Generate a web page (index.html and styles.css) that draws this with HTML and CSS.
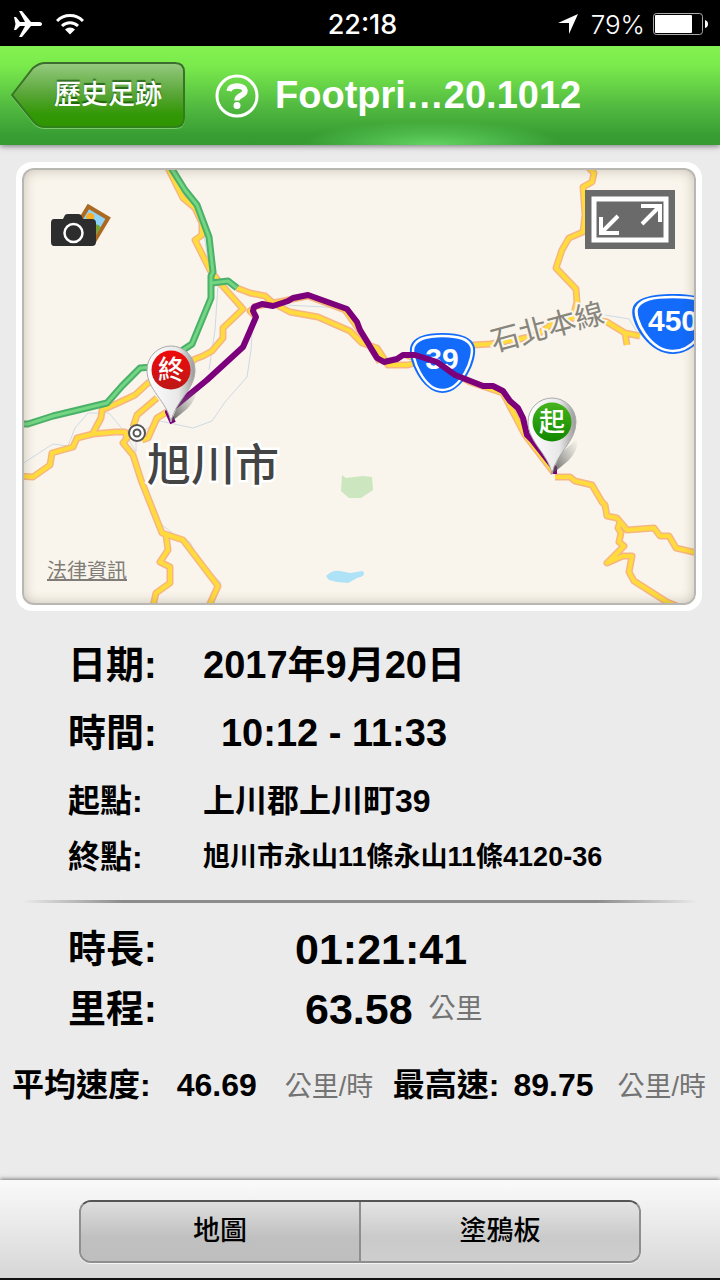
FILE: index.html
```html
<!DOCTYPE html>
<html lang="zh-Hant">
<head>
    <meta charset="UTF-8">
    <meta name="viewport" content="width=device-width, initial-scale=1.0">
    <title>Footprint</title>
    <link rel="stylesheet" href="styles.css">
</head>
<body>

    <!-- Status bar -->
    <div class="status-bar">
        <div class="status-left">
            <svg width="29" height="26" viewBox="0 0 29 26"><path fill="#fff" d="M1 6h2l4 5h5L6 0h3l9 11h8q3 0 3 2t-3 2h-8L9 26H6l6-11H7l-4 4H1l1.500-6z"/></svg>
            <svg width="28" height="22" viewBox="0 0 28 22"><g fill="none" stroke="#fff" stroke-width="3"><path d="M1 8a18 18 0 0 1 26 0"/><path d="M6 13a11.500 11.500 0 0 1 16 0"/></g><path fill="#fff" d="M9 16.500a7 7 0 0 1 10 0L14 21.500z"/></svg>
        </div>
        <div class="status-time">22:18</div>
        <div class="status-right">
            <svg width="20" height="20" viewBox="0 0 20 20"><path fill="#fff" d="M20 0L11 20V9H0z"/></svg>
            <span>79%</span>
            <svg width="55" height="22" viewBox="0 0 55 22"><rect x=".5" y=".5" width="49" height="21" rx="3" fill="none" stroke="#aaa"/><rect x="2" y="2" width="37" height="18" rx="1" fill="#fff"/><path fill="#fff" d="M52 7q3 1 3 4t-3 4z"/></svg>
        </div>
    </div>

    <!-- Navbar -->
    <div class="navbar">
        <button class="back-btn">
            <svg width="174" height="67" viewBox="0 0 174 67">
                <defs>
                    <linearGradient id="back-fill" x2="0" y2="1">
                        <stop offset="0" stop-color="#96cb80"/>
                        <stop offset=".5" stop-color="#57a535"/>
                        <stop offset=".8" stop-color="#339806"/>
                        <stop offset="1" stop-color="#2e9500"/>
                    </linearGradient>
                    <linearGradient id="back-line" x2="0" y2="1">
                        <stop offset="0" stop-color="#3d6d2c"/>
                        <stop offset="1" stop-color="#2f811b"/>
                    </linearGradient>
                </defs>
                <path d="M1 34L22 7Q28 2 34 2H164Q173 2 173 11V57Q173 66 164 66H34Q27 66 22 60Z" fill="none" stroke="#7bc96b" stroke-width="2"/>
                <path d="M1 33L22 6Q28 1 34 1H164Q173 1 173 10V56Q173 65 164 65H34Q27 65 22 59Z" fill="url(#back-fill)" stroke="url(#back-line)" stroke-width="2"/>
            </svg>
            <span>歷史足跡</span>
        </button>
        <button class="help-btn" aria-label="Help">
            <svg width="44" height="44" viewBox="0 0 44 44"><circle cx="22" cy="22" r="20" fill="none" stroke="#fff" stroke-width="3"/><path d="M14 17q1-5 8-5t8 4.500q0 3-4 5-4 2-4 5" fill="none" stroke="#fff" stroke-width="5.500"/><circle cx="22" cy="31.500" r="3.500" fill="#fff"/></svg>
        </button>
        <h1 class="title">Footpri…20.1012</h1>
    </div>

    <div class="container">
        <!-- Route map -->
        <div class="map-card">
            <svg class="map" viewBox="22 168 674 437" preserveAspectRatio="xMidYMid slice">
                <defs>
                    <linearGradient id="pin-fill">
                        <stop offset="0" stop-color="#fff"/>
                        <stop offset=".65" stop-color="#e8e8e8"/>
                        <stop offset="1" stop-color="#999"/>
                    </linearGradient>
                    <linearGradient id="pin-red" x2="0" y2="1"><stop offset="0" stop-color="#f00a0a"/><stop offset="1" stop-color="#bd1818"/></linearGradient>
                    <linearGradient id="pin-green" x2="0" y2="1"><stop offset="0" stop-color="#45b31c"/><stop offset="1" stop-color="#118800"/></linearGradient>
                    <linearGradient id="pin-shade" x1="0" y1="1" x2="1" y2="0"><stop offset="0" stop-color="#444" stop-opacity=".9"/><stop offset="1" stop-color="#888" stop-opacity="0"/></linearGradient>
                    <g id="roads">
                        <path d="M167 166L183 198 195 208 202 223V235L195 240 210 270 220 283 243 309 223 328V338L212 351 203 356 195 359 172 378 148 383 135 395 118 403 102 410 101 418 93 433"/>
                        <path d="M237 288L250 293 265 296 273 303 290 312 318 317 350 331 362 343 377 348 388 365H408L440 355 473 345 490 344 520 339 537 335 553 323 577 317 607 322 625 333 640 336M627 345L625 333"/>
                        <path d="M587 166L594 173 592 182 583 187 585 215 583 232 569 238 562 250 556 268 576 289 577 302 573 317"/>
                        <path d="M20 476L33 477 50 465 52 453 73 447 77 438 93 434 115 432H125L127 438 123 443 133 455 141 480 162 533 183 540 218 586 209 606"/>
                        <path d="M166 535L168 550 160 562 170 567V583L156 593 153 606M157 398L137 415 133 427M167 412L157 418 148 438 142 440"/>
                        <path d="M256 317L250 311 253 309M405 355L437 364 470 382 503 393 525 435 554 473M555 477H570L575 481 592 485 602 502 605 505 607 516 617 518 627 530 654 528 660 536H669L676 548 697 553"/>
                        <path d="M620 522L618 528 621 533 619 542 624 546 607 563 623 556H632L629 572 634 581 667 602 677 606M253 307L293 299 308 296 345 310 358 328 380 362"/>
                    </g>
                    <path id="highway" d="M170 166L185 190 197 205 209 237 213 272 211 276V298L192 344 183 350 165 366 140 368 122 386 107 403 78 410 53 416 28 424H20M212 283L228 281 237 288"/>
                    <g id="shield">
                        <path d="M0-31C18-31 29-27 32-18C36-6 21 29 0 29C-21 29-36-6-32-18C-29-27-18-31 0-31Z" fill="#126bfb"/>
                        <path d="M0-28C17-28 26-25 29-17C32-7 19 26 0 26C-19 26-32-7-29-17C-26-25-17-28 0-28Z" fill="none" stroke="#fff" stroke-width="2.500"/>
                    </g>
                    <g id="pin">
                        <path d="M0 52L8 32 25 17Q27 28 16 39Z" fill="url(#pin-shade)"/>
                        <path d="M0 52C-4 31-24 20-24 0A24 24 0 0 1 24 0C24 20 4 31 0 52Z" fill="url(#pin-fill)" stroke="#aaa"/>
                    </g>
                </defs>

                <rect x="22" y="168" width="674" height="437" fill="#f9f5ec"/>
                <path d="M342 475L346 478 363 476 372 477 373 490 361 498 349 498 341 491Z" fill="#cce6bf"/>
                <path d="M326 576Q332 570 340 571L350 573 363 571Q367 576 357 578L348 583Q338 583 329 580Z" fill="#aee2f7"/>
                <path fill="none" stroke="#cfdae4" d="M22 464L53 444 68 446 75 428 88 413H109L123 430 136 452V435L160 421 193 428 212 421 225 402 247 377 251 350 253 315M204 235L208 260M218 285L215 330 209 370M285 305L345 308M605 315L629 319 637 332M162 525L175 535 190 542 199 560 221 583 213 600"/>

                <use href="#roads" fill="none" stroke="#f7b583" stroke-width="7" stroke-linejoin="round"/>
                <use href="#roads" fill="none" stroke="#ffdc3c" stroke-width="4" stroke-linejoin="round"/>
                <use href="#highway" fill="none" stroke="#4bb069" stroke-width="7" stroke-linejoin="round"/>
                <use href="#highway" fill="none" stroke="#73d682" stroke-width="3" stroke-linejoin="round"/>

                <text class="rail-label" transform="translate(494 352) rotate(-15)">石北本線</text>
                <use href="#shield" transform="translate(442.500 364)"/>
                <text class="route-no" x="442" y="369">39</text>
                <use href="#shield" transform="translate(673 325) scale(1.250 1)"/>
                <text class="route-no" x="673" y="331">450</text>

                <path class="track" d="M173 423L168 412L207 380 243 347 250 331 256 317 253 311 254 307 262 304 273 306 288 301 293 298 308 295 347 309 357 322 360 330 377 358 384 362 397 359 403 355H415L437 362 455 375 483 386H493L503 391 510 401 518 408 523 418 527 435 532 440 554 468V474"/>

                <g fill="#fff" stroke="#555" stroke-width="2"><circle cx="137" cy="433" r="8"/><circle cx="137" cy="433" r="3.500"/></g>
                <text class="city-label" x="147" y="481">旭川市</text>

                <use href="#pin" x="171" y="370"/>
                <circle cx="171" cy="370" r="19.500" fill="url(#pin-red)"/>
                <text class="pin-label" x="171" y="379">終</text>
                <use href="#pin" x="552" y="422"/>
                <circle cx="552" cy="422" r="19.500" fill="url(#pin-green)"/>
                <text class="pin-label" x="552" y="431">起</text>
            </svg>

            <button class="photo-btn" aria-label="Photos">
                <svg width="62" height="46" viewBox="0 0 62 46">
                    <g transform="rotate(31 43 19)">
                        <rect x="29" y="6" width="27" height="29" fill="#ac6922"/>
                        <rect x="33" y="10" width="19" height="21" fill="#8dd4f9"/>
                        <path d="M33 26q5-7 10-2 5-8 9-4V31H33z" fill="#75a52c"/>
                        <circle cx="38" cy="16" r="4" fill="#f9ae25"/>
                    </g>
                    <path d="M4 16H13L15 12Q16 11 18 11H28Q30 11 31 12L33 16H42Q46 16 46 20V39Q46 43 42 43H4Q1 43 1 39V20Q1 16 4 16Z" fill="#2d2d2d"/>
                    <circle cx="23.500" cy="30" r="9" fill="#2d2d2d" stroke="#fff" stroke-width="2.500"/>
                </svg>
            </button>
            <button class="expand-btn" aria-label="Full screen">
                <svg width="90" height="59" viewBox="0 0 90 59"><rect width="90" height="59" fill="#6a6a6a"/><g fill="none" stroke="#fff"><rect x="9" y="9" width="72" height="41" stroke-width="5"/><path stroke-width="4" d="M16 27V43H34M16 43L33 26M56 16H75V32M75 16L57 34"/></g></svg>
            </button>
            <a class="legal" href="#">法律資訊</a>
        </div>

        <!-- Trip details -->
        <div class="details">
            <div class="row"><span class="label">日期:</span><span class="value centered">2017年9月20日</span></div>
            <div class="row"><span class="label">時間:</span><span class="value centered">10:12 - 11:33</span></div>
            <div class="row place"><span class="label">起點:</span><span class="value">上川郡上川町39</span></div>
            <div class="row place end"><span class="label">終點:</span><span class="value address">旭川市永山11條永山11條4120-36</span></div>
        </div>

        <hr class="divider">

        <div class="details totals">
            <div class="row"><span class="label">時長:</span><span class="value duration">01:21:41</span></div>
            <div class="row"><span class="label">里程:</span><span class="value distance">63.58 <span class="unit">公里</span></span></div>
        </div>

        <div class="speeds">
            <div class="speed average"><span>平均速度:</span><span>46.69</span><span class="unit">公里/時</span></div>
            <div class="speed"><span>最高速:</span><span>89.75</span><span class="unit">公里/時</span></div>
        </div>
    </div>

    <!-- Bottom toolbar -->
    <div class="toolbar">
        <div class="segmented">
            <button class="segment active">地圖</button>
            <button class="segment">塗鴉板</button>
        </div>
    </div>

</body>
</html>
```
FILE: styles.css
```css
* {
    box-sizing: border-box;
}

body {
    font-family: "Liberation Sans", "Noto Sans CJK TC", sans-serif;
    background-color: #ebebeb;
    margin: 0;
    color: #000;
    min-height: 100vh;
    display: flex;
    flex-direction: column;
}

button {
    font-family: inherit;
    background: none;
    border: none;
    padding: 0;
    cursor: pointer;
}

svg {
    display: block;
}

/* Status bar */
.status-bar {
    background-color: #000;
    color: #fff;
    height: 46px;
    padding: 2px 12px 0 13px;
    display: grid;
    grid-template-columns: 1fr auto 1fr;
    align-items: center;
    font-family: Inter, sans-serif;
    font-size: 27px;
}

.status-left, .status-right {
    display: flex;
    align-items: center;
    gap: 14px;
}

.status-time {
    font-weight: 500;
    padding-left: 4px;
}

.status-right {
    justify-content: flex-end;
    gap: 8px;
    font-size: 26px;
    font-weight: 300;
}

.status-right svg:first-child {
    margin-right: 5px;
}

/* Navbar */
.navbar {
    height: 99px;
    padding: 0 11px;
    display: flex;
    align-items: center;
    background: radial-gradient(ellipse 130px 24px at 60% 100%, rgba(110, 225, 110, 0.8), transparent),
        linear-gradient(#84f351, #7aea4c 20%, #51b940 62%, #389e34 90%, #359b32);
    box-shadow: 0 1px 6px rgba(0, 0, 0, 0.5);
    position: relative;
}

.back-btn {
    position: relative;
    color: #fff;
    font-size: 27px;
    font-weight: 500;
    text-shadow: 0 -2px 1px rgba(0, 60, 0, 0.6);
}

.back-btn span {
    position: absolute;
    inset: 0 20px 6px 43px;
    display: flex;
    align-items: center;
    white-space: nowrap;
}

.help-btn {
    margin: 0 16px 0 30px;
}

.title {
    margin: 0;
    color: #fff;
    font-size: 38px;
    white-space: nowrap;
}

/* Map */
.container {
    flex: 1;
    padding-top: 17px;
}

.map-card {
    position: relative;
    margin: 0 18px 20px 16px;
    border: 6px solid #fff;
    border-radius: 16px;
    overflow: hidden;
}

.map-card::after {
    content: "";
    position: absolute;
    inset: 0;
    border: 2px solid #b9b7b3;
    border-radius: 12px;
    box-shadow: inset 0 0 12px rgba(90, 70, 50, 0.3), 0 0 0 6px #fff;
    pointer-events: none;
}

.map {
    width: 100%;
    height: auto;
}

.track {
    fill: none;
    stroke: #7c007c;
    stroke-width: 6px;
    stroke-linejoin: round;
}

.route-no {
    font-size: 30px;
    font-weight: bold;
    fill: #fff;
    text-anchor: middle;
}

.city-label {
    font-size: 44px;
    font-weight: 500;
    fill: #444;
    stroke: #fff;
    stroke-width: 5px;
    paint-order: stroke;
}

.rail-label {
    font-size: 29px;
    fill: #88857d;
    stroke: #f9f5ec;
    stroke-width: 4px;
    paint-order: stroke;
}

.pin-label {
    font-size: 26px;
    font-weight: 500;
    fill: #fff;
    text-anchor: middle;
}

.photo-btn {
    position: absolute;
    top: 35px;
    left: 28px;
}

.expand-btn {
    position: absolute;
    top: 22px;
    right: 21px;
}

.legal {
    position: absolute;
    left: 25px;
    bottom: 19px;
    font-size: 20px;
    line-height: 30px;
    color: #807d78;
}

/* Trip details */
.details {
    padding-left: 68px;
    font-weight: bold;
}

.row {
    display: grid;
    grid-template-columns: 135px 1fr;
    align-items: center;
    height: 68px;
    font-size: 38px;
    line-height: 1;
    white-space: nowrap;
}

.centered {
    width: 262px;
    text-align: center;
}

.place {
    font-size: 32px;
}

.end {
    height: 44px;
}

.address {
    font-size: 27px;
}

.divider {
    height: 3px;
    margin: 21px 22px 16px;
    border: none;
    background: linear-gradient(to right, transparent, #8c8c8c 15%, #8c8c8c 85%, transparent);
}

.totals .row {
    height: 60px;
}

.duration, .distance {
    font-size: 43px;
    padding-left: 92px;
}

.distance {
    padding-left: 102px;
    display: flex;
    align-items: center;
    gap: 16px;
}

.unit {
    font-size: 27px;
    font-weight: normal;
    color: #737373;
}

.speeds {
    display: flex;
    justify-content: space-between;
    padding: 16px 14px 0 12px;
    font-size: 32px;
    font-weight: bold;
    line-height: 1;
    white-space: nowrap;
}

.speed {
    display: flex;
    align-items: center;
    height: 60px;
    gap: 14px;
}

.speed .unit {
    padding: 4px 0 0 10px;
}

.average {
    gap: 26px;
}

.average .unit {
    padding-left: 2px;
}

/* Toolbar */
.toolbar {
    height: 100px;
    padding: 20px 79px 0;
    background: linear-gradient(#fafafa, #d6d6d6);
    border-bottom: 2px solid #111;
    box-shadow: 0 -1px 4px rgba(0, 0, 0, 0.5);
}

.segmented {
    display: flex;
    height: 63px;
    border: 2px solid #8e8e8e;
    border-top-color: #555;
    border-radius: 12px;
    overflow: hidden;
    box-shadow: 0 1px 0 #f4f4f4;
}

.segment {
    flex: 1;
    padding-bottom: 6px;
    color: #000;
    font-size: 27px;
    font-weight: 500;
    background: linear-gradient(#e4e4e4, #cacaca 60%, #cecece);
}

.active {
    border-right: 2px solid #8e8e8e;
    background: linear-gradient(#dedede, #c0c0c0 60%, #bebebe);
}
```
